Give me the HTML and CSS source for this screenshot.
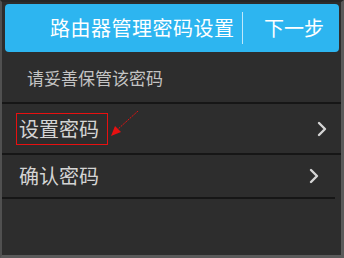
FILE: index.html
```html
<!DOCTYPE html>
<html lang="zh">
<head>
<meta charset="utf-8">
<link rel="stylesheet" href="styles.css">
</head>
<body>
<div class="frame">
  <header class="header">
    <span class="title">路由器管理密码设置</span>
    <span class="sep"></span>
    <span class="next">下一步</span>
  </header>
  <div class="hint">请妥善保管该密码</div>
  <div class="row">
    <span class="label boxed">设置密码</span>
    <svg class="chev" width="10" height="16" viewBox="0 0 10 16"><polyline points="2,2 8,8 2,14" fill="none" stroke="#d4d4d4" stroke-width="2.4" stroke-linecap="round" stroke-linejoin="round"/></svg>
    <svg class="arrow" width="30" height="30" viewBox="0 0 30 30"><line x1="30" y1="0" x2="9" y2="19" stroke="#e81010" stroke-width="1" stroke-dasharray="2,1"/><polygon points="3,25 7,15 13,21" fill="#e81010"/></svg>
  </div>
  <div class="row row2">
    <span class="label">确认密码</span>
    <svg class="chev" width="10" height="16" viewBox="0 0 10 16"><polyline points="2,2 8,8 2,14" fill="none" stroke="#d4d4d4" stroke-width="2.4" stroke-linecap="round" stroke-linejoin="round"/></svg>
  </div>
</div>
</body>
</html>
```

FILE: styles.css
```css
html, body {
  margin: 0;
  padding: 0;
  background: #2d2d2d;
}
.frame {
  width: 344px;
  height: 258px;
  box-sizing: border-box;
  border-left: 2px solid #505050;
  border-right: 3px solid #5a5a5a;
  border-bottom: 3px solid #5a5a5a;
  border-top: 2px solid #262626;
  background: #2d2d2d;
  font-family: "Noto Sans CJK SC", "Noto Sans", sans-serif;
  display: flex;
  flex-direction: column;
  position: relative;
}
.header {
  margin: 2px 0 0 3px;
  height: 48px;
  width: 334px;
  background: #2db5f0;
  border-radius: 4px;
  display: flex;
  align-items: center;
  justify-content: flex-end;
  color: #ffffff;
  font-size: 20px;
  line-height: 1;
}
.title {
  margin-right: 7.5px;
  letter-spacing: 0.5px;
}
.sep {
  width: 1px;
  height: 32px;
  background: #bfe8fb;
}
.next {
  margin-left: 21px;
  margin-right: 15px;
}
.hint {
  height: 50px;
  display: flex;
  align-items: center;
  padding-left: 25px;
  color: #c4c4c4;
  font-size: 17px;
  line-height: 1;
  border-bottom: 2px solid #161616;
}
.row {
  height: 49px;
  display: flex;
  align-items: center;
  justify-content: space-between;
  padding-left: 14px;
  padding-right: 14px;
  border-bottom: 2px solid #161616;
  color: #d4d4d4;
  font-size: 20px;
  line-height: 1;
  position: relative;
}
.row2 {
  height: 42px;
  padding-right: 16px;
  margin-right: 6px;
}
.label {
  display: inline-block;
  padding: 5px 8px 5px 2px;
  border: 1px solid transparent;
}
.boxed {
  border-color: #e81010;
}
.arrow {
  position: absolute;
  left: 106px;
  top: 7px;
}
```
